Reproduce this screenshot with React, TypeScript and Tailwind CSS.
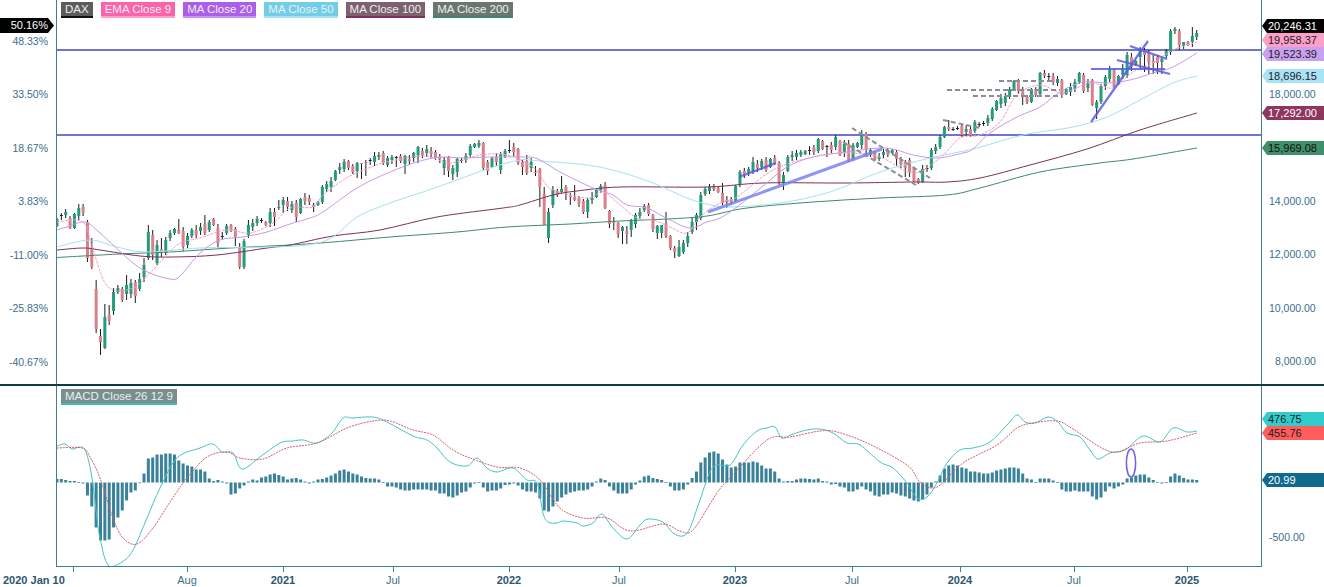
const CANDLES: number[][] = [
  [226,219],[215,215,213,220],[215,212],[218,228,216,229],[228,214],[216,208],[207,213],[222,258,220,262],[247,267,238,269],[289,329,280,333],
  [336,342,329,355],[348,317,304,349],[315,321,305,325],[311,292],[292,288,285,294],[289,300,287,302],[294,285,275,300],[294,283],[282,296,280,303],[289,279,273,291],
  [277,265,258,282],[258,232,225,260],[235,255,230,260],[263,245,240,265],[249,253,238,257],[253,240,237,255],[238,233],[233,229,228,235],[230,233,219,234],[231,247],
  [245,236],[236,230],[230,235,225,238],[231,227],[224,233,215,235],[230,222],[219,225],[228,243],[236,236,232,240],[233,226],
  [225,231],[229,237,227,246],[247,267,243,269],[267,241],[235,225,220,238],[227,223],[223,219],[220,220,218,223],[222,225],[223,212],
  [212,217,208,226],[208,207,200,210],[205,200,197,213],[201,207],[210,204],[203,217,200,222],[213,199],[197,201],[198,202],[205,207,203,212],
  [205,202],[202,187,185,204],[189,184],[187,181,177,192],[180,171],[170,167],[169,162],[161,168,160,170],[166,172,164,174],[171,163,162,178],
  [163,164,163,179],[162,163,160,176],[160,160,158,165],[162,156],[157,155],[153,163],[165,158,156,167],[160,157,155,164],[157,157,156,167],[156,161],
  [164,156,155,174],[159,161],[158,153,152,162],[155,147,146,163],[151,155,148,158],[153,149],[151,154,147,158],[152,158],[157,159,154,163],[168,160,157,175],
  [157,171,156,177],[174,168,165,180],[172,159,158,177],[160,160,158,163],[160,156],[155,146],[147,144],[146,143,140,148],[143,168,142,170],[162,171,160,175],
  [167,158],[157,162],[170,154,152,174],[156,151],[150,150,140,153],[147,152],[149,163,148,165],[162,167,160,175],[161,173,155,175],[168,162],
  [172,173,166,176],[169,187,168,207],[194,225,187,225],[238,212,208,243],[205,190,186,208],[191,195,189,197],[192,189,176,194],[187,193,185,200],[196,197,193,205],[197,200,185,201],
  [198,204,196,207],[201,212,199,214],[212,200,198,218],[200,198,192,204],[197,190],[190,186,184,193],[185,208,182,209],[211,224,210,228],[222,223,217,230],[223,234,222,238],
  [231,227,226,244],[231,234,226,244],[230,221,219,237],[224,215,213,228],[216,212,208,219],[210,206,204,212],[205,214,203,216],[215,229,214,232],[233,226,225,239],[233,225,225,238],
  [223,236,212,238],[236,248,235,250],[248,252,246,258],[256,247,240,257],[252,243,240,254],[243,236],[232,222,218,234],[222,215,213,230],[218,195,192,220],[194,189,187,196],
  [191,187],[186,189],[188,192],[193,203,183,205],[200,202,196,208],[199,203],[201,186],[185,172,170,187],[171,175],[173,169,167,176],
  [172,162,157,174],[164,168],[167,161,159,170],[160,170,157,172],[167,159],[158,163,155,165],[163,182,161,185],[183,175,172,190],[171,157,155,172],[157,155],
  [157,153],[155,152],[154,151],[150,150,146,155],[148,152],[151,139,138,153],[141,149],[146,146,145,157],[145,150],[147,137,135,150],
  [141,155],[153,144],[144,161,140,162],[159,145],[147,143],[145,134],[134,150,132,155],[155,150,148,157],[152,160],[159,157,153,161],
  [155,152],[150,155],[153,150],[152,159,150,166],[160,164,157,168],[162,168,160,177],[160,172,158,177],[168,181,167,182],[179,183,178,184],[182,169,165,183],
  [168,168,165,172],[168,150,148,170],[151,147],[147,137,135,149],[137,127],[127,129,120,131],[129,129,127,131],[128,128,126,130],[126,135,124,137],[132,129],
  [129,135,127,137],[131,122],[124,124,122,127],[123,123,121,126],[123,118],[119,109],[110,101],[104,98],[103,96],[97,89],
  [90,81],[81,91,79,94],[89,97,87,105],[97,102,95,104],[102,89],[89,95,87,97],[94,73,72,97],[73,76,70,78],[76,76,73,80],[76,82,73,85],
  [83,79],[80,95,79,98],[94,89],[92,87],[89,82],[82,73,72,84],[75,91,73,93],[88,83],[80,105,79,106],[108,102,100,119],
  [102,86,84,104],[86,77,75,90],[79,69],[69,87,68,88],[84,76],[75,68],[75,55,52,78],[57,67,53,71],[65,61],[57,50,47,70],
  [50,55,48,72],[53,62,50,74],[61,63,55,74],[57,63,55,74],[62,59,58,74],[56,51],[52,31,29,55],[31,29,27,34],[31,45,29,50],[46,42,42,49],
  [42,45],[42,36,27,47],[37,33,30,40],
];

const HIST = [
  3.5,3.5,2.5,1.5,1.5,0.5,-1,-13,-24,-45,-58,-58,-57,-45,-35,-28,-18,-10,-8,-0.5,
  9,24,25,28,28,29,29,28,22,19,17,16,13,13,11,4,1.5,2.5,1,-1,
  -12,-11,-6,-3,1,3,2,5,6,8,9,7.5,6,3,4,4.5,3,1,-1,1,
  3,3.5,5,7,9,12,13,11,9,8,6,4.5,4,4,3,0.5,-4,-4,-5,-7,
  -8,-8,-7,-7,-7,-7,-8,-8,-11,-11,-14,-15,-13,-10,-9,-5,-1,0.5,-5,-9,
  -8,-8,-6,-2.5,-2,-1,-3,-7,-9,-9,-10,-16,-28,-29,-24,-19,-15,-12,-10,-9,
  -8,-8,-7,-4,1,4,2.5,-4,-8,-11,-11,-11,-7,-2,2,6,7,4.5,3.5,2.5,
  0.5,-4,-8,-8,-7,-2,4.5,11,20,25,30,31,29,23,18,15,16,20,20,20,
  21,20,17,14,14,11,4,1,1.5,1.5,3,4,4,3.5,3,4,1.5,1,-2,-1.5,
  -4,-5,-9,-9,-7,-4,-7,-9,-13,-14,-12,-12,-10,-11,-13,-14,-16,-18,-19,-17,
  -12,-5,1,7,14,17,18,17,15,14,11,11,10,9,9,10,12,13,14,15,
  15,14,9,4,3,0.5,4,4,4,2,0.5,-7,-9,-9,-8,-9,-9,-9,-14,-17,
  -15,-9,-4,-6,-4,-2,4,5,7,8,8,5,2.5,0.5,-1,0.5,6,9,7,4.5,
  3,3,2.5,
];

const MA200 = "57,257.5 120,254 170,252 230,248 290,245 333,242 390,237 457,232 507,227 570,224 620,221 667,219 707,216 747,208 813,202 880,198 947,195 980,188 1040,172 1100,163 1133,159 1197,148";
const MA100 = "57,250 83,248 100,250 140,256 173,257 217,255 267,248 290,245 333,236 380,230 437,217 503,208 520,205 553,195 577,191 620,187 707,187 763,183 847,183 913,182 947,182 980,178 1030,165 1087,149 1140,130 1197,113";
const MA50 = "57,247 90,240 117,247 147,252 200,248 267,247 307,245 333,237 357,217 390,203 423,192 457,180 490,168 520,160 540,161 587,165 620,172 653,183 687,198 707,204 730,207 780,203 830,192 880,172 930,158 973,149 1023,135 1073,127 1107,117 1140,100 1173,83 1197,76";
const MA20 = "57,230 67,227 85,222 100,233 133,263 150,273 170,279 180,276 200,253 220,240 243,237 267,232 290,224 310,218 323,212 357,188 390,172 417,162 440,157 463,158 490,157 523,157 538,159 560,172 593,188 613,195 627,205 647,208 670,220 690,228 707,222 720,218 737,207 763,186 787,167 813,157 847,152 880,148 897,150 913,155 937,158 963,153 973,149 990,133 1017,117 1040,107 1060,92 1083,82 1107,83 1130,80 1153,73 1173,67 1197,53";
const EMA9 = "57,222 83,222 93,250 108,287 133,288 153,270 177,245 200,238 227,230 250,233 273,223 290,208 313,207 323,195 343,180 357,173 383,163 423,156 450,163 480,155 507,155 533,167 543,180 553,190 587,198 603,192 620,205 637,218 653,220 670,227 687,233 700,217 720,203 737,197 773,170 813,157 847,153 880,157 913,173 940,158 960,138 980,135 1000,122 1017,95 1040,85 1063,93 1090,83 1113,88 1133,72 1153,63 1173,50 1197,42";
const MACD = "57,446 65,444 72,449 80,447 86,452 92,478 97,518 100,538 108,565 122,562 133,550 147,518 160,488 177,458 200,448 213,444 222,452 233,453 242,469 260,457 280,443 293,441 303,440 317,443 332,433 343,418 353,418 373,417 387,422 413,436 427,440 437,448 450,462 467,466 477,458 487,468 497,472 513,468 527,480 537,483 543,513 548,522 557,523 563,521 577,523 583,526 593,523 602,514 613,528 627,539 640,525 648,519 663,522 673,533 683,536 690,528 700,500 713,467 730,465 743,445 757,431 767,428 775,427 782,438 793,434 807,430 820,429 833,433 847,443 860,445 880,462 893,468 907,483 917,498 927,497 937,483 947,463 960,450 973,448 990,442 1007,425 1017,415 1025,422 1035,423 1048,417 1058,422 1067,433 1080,437 1090,450 1098,459 1110,453 1125,450 1143,436 1160,442 1173,428 1187,432 1197,431";
const SIGNAL = "57,448 82,448 90,457 100,478 113,518 123,538 137,544 153,528 170,502 187,478 207,457 227,452 240,458 263,459 287,448 317,443 347,428 373,421 390,421 413,430 433,435 453,450 470,458 497,467 520,468 540,480 560,508 583,518 607,518 630,531 663,524 680,531 693,530 717,493 730,478 767,440 790,437 820,431 837,432 867,443 907,465 920,482 937,487 963,463 997,445 1017,428 1033,423 1057,421 1073,429 1100,447 1117,452 1140,443 1167,441 1197,433";

const LEGEND = [
  { label: "DAX", cls: "bg-[#5c5c5c] border-[#111111]" },
  { label: "EMA Close 9", cls: "bg-[#fb64ac] border-[#ffa0cc]" },
  { label: "MA Close 20", cls: "bg-[#ab5ee9] border-[#c693f2]" },
  { label: "MA Close 50", cls: "bg-[#70cee8] border-[#a4e2f4]" },
  { label: "MA Close 100", cls: "bg-[#7b626e] border-[#7f2f58]" },
  { label: "MA Close 200", cls: "bg-[#69786f] border-[#3f8365]" },
];

const PCT = ["48.33%", "33.50%", "18.67%", "3.83%", "-11.00%", "-25.83%", "-40.67%"];

const XLABELS = [
  { t: "Aug", x: 187, bold: false },
  { t: "2021", x: 283, bold: true },
  { t: "Jul", x: 393, bold: false },
  { t: "2022", x: 509, bold: true },
  { t: "Jul", x: 619, bold: false },
  { t: "2023", x: 735, bold: true },
  { t: "Jul", x: 852, bold: false },
  { t: "2024", x: 960, bold: true },
  { t: "Jul", x: 1074, bold: false },
  { t: "2025", x: 1187, bold: true },
];

const STEP = 4.35;

// catmull-rom through the read-off points, so the averages don't look like a ruler drew them
function smooth(points: string) {
  const p = points.split(" ").map((s) => s.split(",").map(Number));
  let d = `M${p[0][0]},${p[0][1]}`;
  for (let i = 0; i < p.length - 1; i++) {
    const a = p[Math.max(i - 1, 0)];
    const b = p[i];
    const c = p[i + 1];
    const e = p[Math.min(i + 2, p.length - 1)];
    const c1x = b[0] + (c[0] - a[0]) / 6;
    const c1y = b[1] + (c[1] - a[1]) / 6;
    const c2x = c[0] - (e[0] - b[0]) / 6;
    const c2y = c[1] - (e[1] - b[1]) / 6;
    d += ` C${c1x.toFixed(1)},${c1y.toFixed(1)} ${c2x.toFixed(1)},${c2y.toFixed(1)} ${c[0]},${c[1]}`;
  }
  return d;
}

function Candle({ d, i }: { d: number[]; i: number }) {
  const x = 57 + i * STEP;
  const top = Math.min(d[0], d[1]);
  const bot = Math.max(d[0], d[1]);
  const hi = d[2] ?? top - (1 + ((i * 7) % 4));
  const lo = d[3] ?? bot + (1 + ((i * 11) % 4));
  const fill = d[0] === d[1] ? "#222222" : d[1] < d[0] ? "#229c7a" : "#da8089";
  return (
    <g>
      <line x1={x} x2={x} y1={hi} y2={lo} stroke="#1a1a1a" strokeWidth={1} />
      <rect x={x - 1.5} y={top} width={3} height={Math.max(bot - top, 1)} fill={fill} />
    </g>
  );
}

function Tag({ text, cls }: { text: string; cls: string }) {
  return (
    <div className={`h-[14px] pl-[6px] text-[11px] leading-[14px] [clip-path:polygon(5px_0,100%_0,100%_100%,5px_100%,0_50%)] ${cls}`}>
      {text}
    </div>
  );
}

function AxisText({ text, cls }: { text: string; cls: string }) {
  return <div className={`h-[14px] pl-[7px] text-[10.5px] leading-[14px] text-[#3a6f8c] ${cls}`}>{text}</div>;
}

export default function App() {
  return (
    <div className="w-[1324px] h-[587px] overflow-hidden bg-white font-['Liberation_Sans',sans-serif]">
      <div className="flex h-[384px]">
        <div className="relative w-[56px] pt-[34px] text-right text-[10.5px] text-[#3a6f8c]">
          <div className="absolute left-0 top-[18px] h-[15px] w-[54px] bg-black pr-[6px] text-[11px] leading-[15px] text-white [clip-path:polygon(0_0,48px_0,100%_50%,48px_100%,0_100%)]">
            50.16%
          </div>
          {PCT.map((p) => (
            <div key={p} className="h-[53.45px] pr-[8px] leading-[14px]">
              {p}
            </div>
          ))}
        </div>

        <div className="relative w-[1206px] border-x border-[#3f7f92]">
          <svg viewBox="57 0 1204 384" className="block h-full w-full">
            <line x1="56" x2="1262" y1="50" y2="50" stroke="#7272d0" strokeWidth={2} />
            <line x1="56" x2="1262" y1="135" y2="135" stroke="#7272d0" strokeWidth={2} />
            {CANDLES.map((d, i) => (
              <Candle key={i} d={d} i={i} />
            ))}
            <path d={smooth(MA200)} fill="none" stroke="#3f8a68" strokeWidth={1} />
            <path d={smooth(MA100)} fill="none" stroke="#7d2f58" strokeWidth={1} />
            <path d={smooth(MA50)} fill="none" stroke="#a6e0ee" strokeWidth={1} />
            <path d={smooth(MA20)} fill="none" stroke="#c79ae6" strokeWidth={1} />
            <path d={smooth(EMA9)} fill="none" stroke="#f2a0c8" strokeWidth={1} strokeDasharray="3 1" />
            <g stroke="#8c8c96" strokeWidth={2} strokeDasharray="5 3">
              <line x1="852" y1="128" x2="930" y2="178" />
              <line x1="843" y1="142" x2="916" y2="185" />
              <line x1="943" y1="120" x2="980" y2="128" />
              <line x1="999" y1="81" x2="1055" y2="81" />
              <line x1="947" y1="90" x2="1060" y2="90" />
              <line x1="973" y1="96" x2="1062" y2="96" />
            </g>
            <g stroke="#5c5ce6" strokeOpacity={0.85} strokeWidth={2.2}>
              <line x1="708" y1="212" x2="882" y2="149" stroke="#7b82f0" strokeWidth={3} />
              <line x1="739" y1="177" x2="776" y2="163" />
              <line x1="1091" y1="122" x2="1148" y2="41" />
              <line x1="1091" y1="69" x2="1165" y2="69" />
              <line x1="1117" y1="60" x2="1170" y2="74" />
              <line x1="1130" y1="46" x2="1167" y2="59" />
            </g>
          </svg>
          <div className="absolute left-[4px] top-[2px] flex gap-[8px]">
            {LEGEND.map((l) => (
              <div key={l.label} className={`h-[16px] border-b-2 px-[4px] text-[11.5px] leading-[14px] text-[#eeeeee] ${l.cls}`}>
                {l.label}
              </div>
            ))}
          </div>
        </div>

        <div className="flex-1 pt-[19px]">
          <Tag text="20,246.31" cls="bg-black text-white" />
          <Tag text="19,958.37" cls="bg-[#ff9fc9] text-[#222222]" />
          <Tag text="19,523.39" cls="bg-[#c8a2f1] text-[#222222]" />
          <Tag text="18,696.15" cls="mt-[8px] bg-[#a9e3f6] text-[#222222]" />
          <AxisText text="18,000.00" cls="mt-[4px]" />
          <Tag text="17,292.00" cls="mt-[5px] bg-[#8e3560] text-white" />
          <Tag text="15,969.08" cls="mt-[21px] bg-[#3f8f6a] text-[#111111]" />
          <AxisText text="14,000.00" cls="mt-[39px]" />
          <AxisText text="12,000.00" cls="mt-[39px]" />
          <AxisText text="10,000.00" cls="mt-[40px]" />
          <AxisText text="8,000.00" cls="mt-[39px] pl-[13px]" />
        </div>
      </div>

      <div className="h-[2px] bg-[#0f3a46]" />

      <div className="flex h-[181px]">
        <div className="w-[56px]" />
        <div className="relative w-[1206px] border-x border-b border-[#3f7f92]">
          <svg viewBox="57 386 1204 180" className="block h-full w-full">
            {HIST.map((v, i) => (
              <rect
                key={i}
                x={55.5 + i * STEP}
                y={v > 0 ? 482.5 - v : 482.5}
                width={3}
                height={Math.max(Math.abs(v), 0.7)}
                fill="#3a8299"
              />
            ))}
            <path d={smooth(MACD)} fill="none" stroke="#45c4c4" strokeWidth={1} />
            <path d={smooth(SIGNAL)} fill="none" stroke="#d95a6c" strokeWidth={1} strokeDasharray="2 1" />
            <ellipse cx="1131" cy="463" rx="4.6" ry="14" fill="none" stroke="#7563e6" strokeWidth={1.6} />
          </svg>
          <div className="absolute left-[4px] top-[3px] h-[16px] border-b-2 border-[#41b9bd] bg-[#77908f] px-[4px] text-[11.5px] leading-[14px] text-[#eeeeee]">
            MACD Close 26 12 9
          </div>
        </div>
        <div className="flex-1 pt-[26px]">
          <Tag text="476.75" cls="bg-[#33cccc] text-[#222222]" />
          <Tag text="455.76" cls="bg-[#ff5c5c] text-[#222222]" />
          <Tag text="20.99" cls="mt-[33px] bg-[#0d6a8a] text-white" />
          <AxisText text="-500.00" cls="mt-[43px]" />
        </div>
      </div>

      <div className="relative h-[20px] text-[11px] text-[#3a6f8c]">
        <span className="absolute left-[3px] top-[5px] font-bold text-[#2b566f]">2020 Jan 10</span>
        <div className="absolute left-[73px] top-0 h-[5px] w-px bg-[#3f7f92]" />
        {XLABELS.map((l) => (
          <div key={l.x}>
            <div className="absolute top-0 h-[5px] w-px bg-[#3f7f92]" style={{ left: l.x }} />
            <span
              className={`absolute top-[5px] w-[40px] -translate-x-1/2 text-center ${l.bold ? "font-bold text-[#2b566f]" : ""}`}
              style={{ left: l.x }}
            >
              {l.t}
            </span>
          </div>
        ))}
      </div>
    </div>
  );
}
